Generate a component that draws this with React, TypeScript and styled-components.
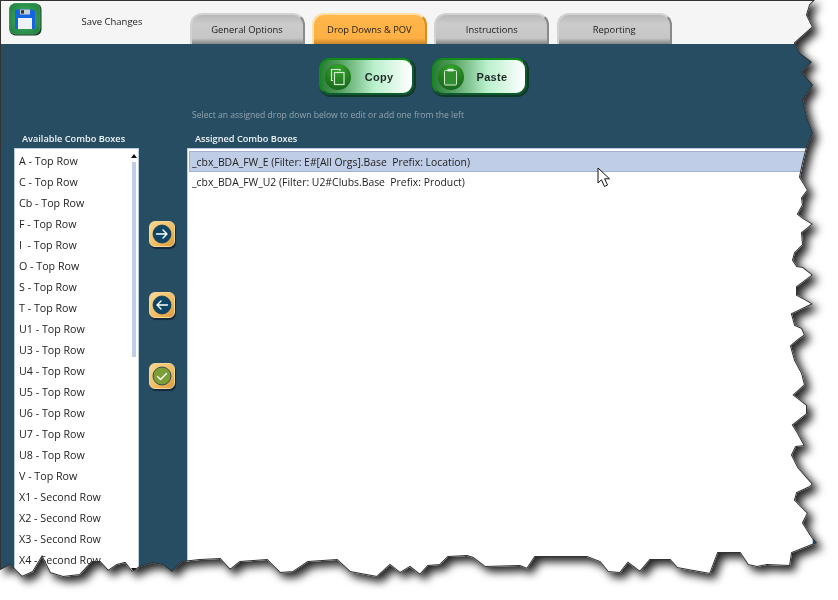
import React from 'react'
import styled, { createGlobalStyle } from 'styled-components'

const GlobalStyle = createGlobalStyle`
html, body {
  margin: 0;
  background: #fff;
  overflow: hidden;
}
* {
  box-sizing: border-box;
}
`

// torn edge of the screenshot, traced clockwise from the top left corner
const edge: [number, number][] = [
  [0, 0], [815, 0], [810, 5], [807, 15], [813, 27], [795, 43], [800, 53], [812, 62], [802, 72], [813, 85],
  [803, 100], [807, 117], [813, 133], [807, 147], [803, 163], [800, 177], [808, 190], [802, 198], [803, 205],
  [798, 214], [803, 218], [813, 224], [802, 233], [803, 245], [795, 253], [793, 260], [797, 266], [803, 267],
  [813, 275], [797, 287], [797, 295], [803, 298], [813, 304], [792, 314], [795, 325], [802, 328], [805, 335],
  [798, 340], [791, 346], [795, 360], [802, 373], [805, 385], [794, 395], [807, 405], [807, 414], [793, 425],
  [798, 433], [805, 446], [796, 447], [792, 455], [798, 467], [805, 475], [813, 484], [810, 487], [797, 493],
  [795, 500], [808, 513], [803, 523], [812, 537], [817, 543], [792, 553], [790, 566], [767, 565], [757, 567],
  [748, 565], [740, 553], [718, 553], [710, 574], [677, 568], [670, 560], [650, 560], [640, 572], [628, 563],
  [620, 573], [608, 572], [600, 562], [587, 557], [535, 557], [527, 569], [520, 566], [485, 567], [473, 558],
  [467, 556], [448, 557], [440, 565], [428, 566], [420, 575], [410, 567], [400, 573], [390, 565], [377, 577],
  [350, 572], [337, 560], [308, 562], [293, 572], [280, 573], [267, 560], [240, 562], [230, 570], [220, 559],
  [200, 560], [182, 562], [172, 572], [163, 565], [153, 563], [140, 567], [132, 572], [125, 563], [117, 565],
  [108, 571], [100, 562], [92, 562], [80, 575], [63, 577], [50, 573], [42, 557], [33, 572], [22, 577], [10, 565],
  [0, 570],
]
const clipPoints = edge.map(([x, y]) => `${x}px ${y}px`).join(', ')
const linePoints = edge.map(([x, y]) => `${x},${y}`).join(' ')

const Shadow = styled.div`
  width: 838px;
  height: 600px;
  filter: drop-shadow(5px 5px 4px rgba(0, 0, 0, 0.85));
`
const Page = styled.div`
  position: relative;
  width: 838px;
  height: 600px;
  overflow: hidden;
  display: flex;
  flex-direction: column;
  clip-path: polygon(${clipPoints});
  font-family: "Open Sans", "Liberation Sans", sans-serif;
  background: #f5f5f5;
`
const EdgeLine = styled.svg`
  position: absolute;
  left: 0;
  top: 0;
  pointer-events: none;
`
const Cursor = styled.svg`
  position: absolute;
  left: 597px;
  top: 167px;
`
const TopBar = styled.div`
  height: 44px;
  flex: none;
  display: flex;
  align-items: flex-start;
  padding: 3px 0 0 9px;
`
const SaveButton = styled.button`
  width: 33px;
  height: 33px;
  padding: 0;
  border: 0;
  background: none;
  display: block;
`
const SaveLabel = styled.span`
  width: 140px;
  padding-top: 12px;
  text-align: center;
  font-size: 9.5px;
  color: #222;
`
const Tabs = styled.div`
  display: flex;
  gap: 7.4px;
  padding-top: 10px;
  margin-left: 7.5px;
`
const Tab = styled.div<{ $active?: boolean }>`
  width: 115px;
  height: 31px;
  padding-top: 5px;
  text-align: center;
  font-size: 9.4px;
  line-height: 20px;
  color: #1c1c1c;
  border-radius: 12px 12px 0 0;
  border: 2px solid ${(props) => (props.$active ? '#ffdfa6' : '#d2d2d2')};
  border-right-color: ${(props) => (props.$active ? '#d98c22' : '#8a8a8a')};
  border-bottom: 0;
  background: ${(props) =>
    props.$active
      ? 'linear-gradient(#ffb64a 0, #ffb044 80%, #c8862c 100%)'
      : 'linear-gradient(#b9b9b9 0, #cbcbcb 30%, #c6c6c6 80%, #858585 100%)'};
`
const Content = styled.div`
  flex: 1;
  background: #274d63;
  border-left: 1px solid #a9bfd6;
  padding: 14px 25px 0 13px;
  display: flex;
  flex-direction: column;
  min-height: 0;
`
const Toolbar = styled.div`
  display: flex;
  justify-content: center;
  gap: 18px;
  padding-left: 18px;
`
const GlossyButton = styled.button`
  width: 95px;
  height: 37px;
  padding: 0 0 0 4px;
  display: flex;
  align-items: center;
  border: 2.5px solid #118a18;
  border-right-color: #0d5a2c;
  border-bottom-color: #0d5a2c;
  border-radius: 11px;
  background: linear-gradient(90deg, #2a7f38 0, #4d9a58 18%, #b9f0cc 58%, #ffffff 100%);
  box-shadow: 1px 1px 0 1px #12382b;
`
const Disc = styled.span`
  width: 26px;
  height: 26px;
  flex: none;
  border-radius: 50%;
  display: flex;
  align-items: center;
  justify-content: center;
  background: radial-gradient(circle at 50% 20%, #35a52c 0, #1f7a1e 60%, #175c22 100%);
`
const GlossyLabel = styled.span`
  flex: 1;
  padding-right: 4px;
  text-align: center;
  font-family: "Liberation Sans", Arial, sans-serif;
  font-weight: 700;
  font-size: 11px;
  letter-spacing: 0.3px;
  color: #1f2a26;
`
const Hint = styled.div`
  margin: 13px 0 0 178px;
  height: 14px;
  font-size: 8.6px;
  line-height: 14px;
  color: #93a4af;
`
const Panels = styled.div`
  flex: 1;
  margin-top: 10px;
  display: grid;
  grid-template-columns: 125px 48px 1fr;
  grid-template-rows: 16px 430px;
  min-height: 0;
`
const PanelTitle = styled.div<{ $column: number }>`
  grid-column: ${(props) => props.$column};
  padding-left: 8px;
  font-size: 9.2px;
  font-weight: 600;
  line-height: 14px;
  color: #eef3f6;
`
const ListBox = styled.div<{ $fontSize: number }>`
  background: #fff;
  border: 1px solid #b7cbe3;
  display: flex;
  overflow: hidden;
  padding-top: 2px;
  font-size: ${(props) => props.$fontSize}px;
`
const Rows = styled.div`
  flex: 1;
  min-width: 0;
`
const Row = styled.div<{ $selected?: boolean }>`
  height: 21px;
  line-height: 20px;
  padding-left: ${(props) => (props.$selected ? '2px' : '3px')};
  white-space: pre;
  color: #222;
  background: ${(props) => (props.$selected ? '#bfcde6' : 'transparent')};
  border: ${(props) => (props.$selected ? '1px solid #a3b0cc' : '0')};
  margin-left: 1px;
`
const Scrollbar = styled.div`
  width: 9px;
  flex: none;
  display: flex;
  flex-direction: column;
  align-items: center;
  height: 421px;
`
const ScrollUp = styled.div`
  margin-top: 3px;
  border-left: 3px solid transparent;
  border-right: 3px solid transparent;
  border-bottom: 4px solid #111;
`
const ScrollThumb = styled.div`
  margin-top: 4px;
  width: 4px;
  height: 195px;
  background: #bfcde6;
`
const ScrollDown = styled.div`
  margin-top: auto;
  border-left: 3px solid transparent;
  border-right: 3px solid transparent;
  border-top: 4px solid #111;
`
const Mover = styled.div`
  display: flex;
  flex-direction: column;
  align-items: flex-start;
  gap: 45px;
  padding: 73px 0 0 10px;
`
const MoveButton = styled.button`
  width: 26px;
  height: 26px;
  padding: 0;
  display: flex;
  align-items: center;
  justify-content: center;
  border: 1px solid #f6d592;
  border-radius: 6px;
  background: linear-gradient(135deg, #f8d894 0, #f0bc62 60%, #d9983c 100%);
  box-shadow: 1px 2px 1px #14293a;
`

const available = [
  'A - Top Row', 'C - Top Row', 'Cb - Top Row', 'F - Top Row', 'I  - Top Row', 'O - Top Row', 'S - Top Row',
  'T - Top Row', 'U1 - Top Row', 'U3 - Top Row', 'U4 - Top Row', 'U5 - Top Row', 'U6 - Top Row', 'U7 - Top Row',
  'U8 - Top Row', 'V - Top Row', 'X1 - Second Row', 'X2 - Second Row', 'X3 - Second Row', 'X4 - Second Row',
]
const assigned = [
  '_cbx_BDA_FW_E (Filter: E#[All Orgs].Base  Prefix: Location)',
  '_cbx_BDA_FW_U2 (Filter: U2#Clubs.Base  Prefix: Product)',
]
const tabs = [
  { name: 'General Options' },
  { name: 'Drop Downs & POV', active: true },
  { name: 'Instructions' },
  { name: 'Reporting' },
]

function SaveIcon() {
  return (
    <svg width="33" height="33" viewBox="0 0 33 33">
      <defs>
        <radialGradient id="saveBg" cx="50%" cy="50%" r="70%">
          <stop offset="0" stopColor="#45b868" />
          <stop offset="1" stopColor="#1f7a3c" />
        </radialGradient>
      </defs>
      <rect x="0.5" y="0.5" width="32" height="32" rx="6" fill="#1e3b2a" />
      <rect x="0.5" y="0.5" width="30.5" height="30.5" rx="6" fill="url(#saveBg)" stroke="#3b9a58" />
      <path d="M6 6.5H24L26 8.5V26H6Z" fill="#1565e0" />
      <rect x="11" y="6.5" width="10" height="5" fill="#c9ced6" />
      <rect x="12" y="7.2" width="3" height="3.4" fill="#333" />
      <rect x="9" y="15" width="14" height="11" fill="#eef1f6" />
    </svg>
  )
}

function CopyIcon() {
  return (
    <svg width="16" height="18" viewBox="0 0 16 18" fill="none" stroke="#d6e8d2" strokeWidth="1.2">
      <path d="M3 12.5H1.5V1.5H10V3" />
      <rect x="4.5" y="4.5" width="9.5" height="12" />
    </svg>
  )
}

function PasteIcon() {
  return (
    <svg width="15" height="18" viewBox="0 0 15 18">
      <rect x="1.5" y="2.5" width="12" height="14.5" rx="1" fill="#2f8f2f" stroke="#d6e8d2" strokeWidth="1" />
      <rect x="4.5" y="0.8" width="6" height="2.6" fill="#e4efe0" />
    </svg>
  )
}

function RoundIcon({ fill, d }: { fill: string; d: string }) {
  return (
    <svg width="20" height="20" viewBox="0 0 20 20">
      <circle cx="10" cy="10" r="9" fill={fill} stroke="#12384e" strokeWidth="0.8" />
      <path d={d} fill="none" stroke="#fff" strokeWidth="1.4" strokeLinecap="round" strokeLinejoin="round" />
    </svg>
  )
}

export default function App() {
  return (
    <>
      <GlobalStyle />
      <Shadow>
        <Page>
          <TopBar>
            <SaveButton>
              <SaveIcon />
            </SaveButton>
            <SaveLabel>Save Changes</SaveLabel>
            <Tabs>
              {tabs.map((tab) => (
                <Tab key={tab.name} $active={tab.active}>
                  {tab.name}
                </Tab>
              ))}
            </Tabs>
          </TopBar>
          <Content>
            <Toolbar>
              <GlossyButton>
                <Disc>
                  <CopyIcon />
                </Disc>
                <GlossyLabel>Copy</GlossyLabel>
              </GlossyButton>
              <GlossyButton>
                <Disc>
                  <PasteIcon />
                </Disc>
                <GlossyLabel>Paste</GlossyLabel>
              </GlossyButton>
            </Toolbar>
            <Hint>Select an assigned drop down below to edit or add one from the left</Hint>
            <Panels>
              <PanelTitle $column={1}>Available Combo Boxes</PanelTitle>
              <PanelTitle $column={3}>Assigned Combo Boxes</PanelTitle>
              <ListBox $fontSize={10.7}>
                <Rows>
                  {available.map((item) => (
                    <Row key={item}>{item}</Row>
                  ))}
                </Rows>
                <Scrollbar>
                  <ScrollUp />
                  <ScrollThumb />
                  <ScrollDown />
                </Scrollbar>
              </ListBox>
              <Mover>
                <MoveButton>
                  <RoundIcon fill="#0e4565" d="M4.5 10H15M11 6l4 4-4 4" />
                </MoveButton>
                <MoveButton>
                  <RoundIcon fill="#0e4565" d="M15.5 10H5M9 6l-4 4 4 4" />
                </MoveButton>
                <MoveButton>
                  <RoundIcon fill="#7c9e36" d="M5.5 10.5l3 3 6-6" />
                </MoveButton>
              </Mover>
              <ListBox $fontSize={10.4}>
                <Rows>
                  {assigned.map((item, i) => (
                    <Row key={item} $selected={i === 0}>{item}</Row>
                  ))}
                </Rows>
              </ListBox>
            </Panels>
          </Content>
          <Cursor width="14" height="21" viewBox="0 0 14 21">
            <path d="M1 1V16L4.5 12.8L7.5 19.5L10.5 18L7.6 11.8H12.5Z" fill="#fff" stroke="#111" strokeWidth="1" />
          </Cursor>
          <EdgeLine width="838" height="600" viewBox="0 0 838 600">
            <polygon points={linePoints} fill="none" stroke="#333" strokeWidth="2" />
          </EdgeLine>
        </Page>
      </Shadow>
    </>
  )
}
